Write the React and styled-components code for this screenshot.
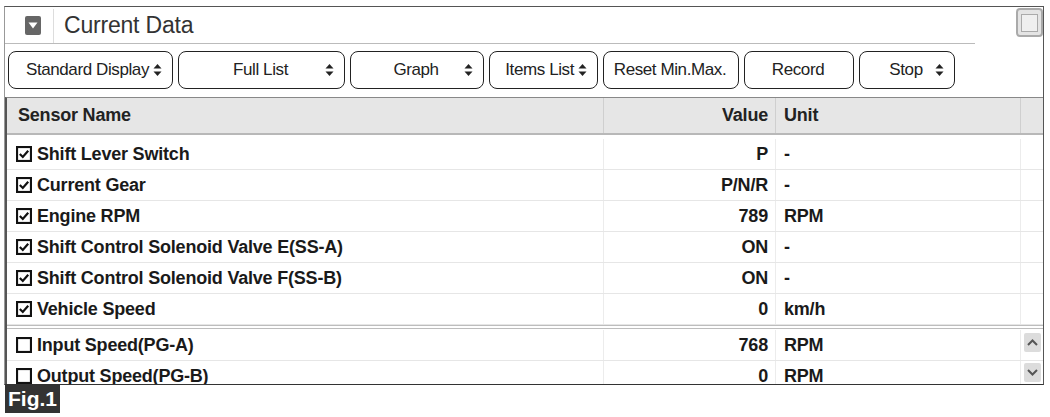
import styled, { createGlobalStyle } from "styled-components";

const GlobalStyle = createGlobalStyle`
  html, body {
    margin: 0;
    padding: 0;
    background: #fff;
  }
  body {
    font-family: "Liberation Sans", Arial, sans-serif;
    color: #222;
  }
`;

const Page = styled.div`
  width: 1050px;
  height: 417px;
  padding: 6px 6px 0 4px;
  box-sizing: border-box;
  overflow: hidden;
`;

const Window = styled.div`
  height: 379px;
  border-top: 1px solid #555;
  border-left: 1px solid #999;
  border-right: 1px solid #555;
  border-bottom: 1px solid #333;
  display: flex;
  flex-direction: column;
  box-sizing: border-box;
`;

const TitleRow = styled.div`
  display: flex;
  align-items: flex-start;
  height: 37px;
`;

const TitleBar = styled.div`
  width: 970px;
  height: 36px;
  border-bottom: 1px solid #bbb;
  display: flex;
  align-items: center;
`;

const TitleIcon = styled.div`
  width: 16px;
  height: 19px;
  margin-left: 20px;
  background: #666;
  border-radius: 2px;
  display: flex;
  align-items: center;
  justify-content: center;
`;

const TitleSep = styled.div`
  width: 1px;
  align-self: stretch;
  margin: 2px 10px 0 12px;
  background: #ddd;
`;

const TitleText = styled.span`
  font-size: 23px;
  color: #333;
  letter-spacing: -0.2px;
`;

const MaxButton = styled.div`
  margin-left: auto;
  margin-top: 1px;
  width: 27px;
  height: 29px;
  box-sizing: border-box;
  border: 2px solid #aaa;
  border-radius: 4px;
  background: #e4e4e4;
  display: flex;
  align-items: center;
  justify-content: center;
`;

const MaxInner = styled.div`
  width: 15px;
  height: 16px;
  border: 1px solid #aaa;
  background: #efefef;
`;

const Toolbar = styled.div`
  display: flex;
  gap: 5px;
  padding: 7px 0 0 3px;
  height: 53px;
  box-sizing: border-box;
`;

const ToolButton = styled.div`
  width: ${(p) => p.$w}px;
  height: 38px;
  box-sizing: border-box;
  border: 1.5px solid #222;
  border-radius: 8px;
  background: #fff;
  display: grid;
  grid-template-columns: 1fr auto 1fr;
  align-items: center;
  padding: 0 10px 0 8px;
  font-size: 17px;
  letter-spacing: -0.4px;
  color: #222;
`;

const ButtonLabel = styled.span`
  grid-column: 2;
  white-space: nowrap;
`;

const ButtonArrow = styled.span`
  grid-column: 3;
  justify-self: ${(p) => (p.$tight ? "start" : "end")};
  margin-left: ${(p) => (p.$tight ? "4px" : "0")};
  display: flex;
`;

const Table = styled.div`
  flex: 1;
  border-top: 1px solid #888;
  border-left: 2px solid #555;
  overflow: hidden;
  display: flex;
  flex-direction: column;
`;

const Cols = "597px 172px 245px 1fr";

const HeaderRow = styled.div`
  display: grid;
  grid-template-columns: ${Cols};
  flex-shrink: 0;
  height: 35px;
  background: #e6e6e6;
  border-bottom: 2px solid #b8b8b8;
  font-weight: bold;
  font-size: 18px;
  letter-spacing: -0.2px;
`;

const Cell = styled.div`
  display: flex;
  align-items: center;
  justify-content: ${(p) => (p.$right ? "flex-end" : "flex-start")};
  padding: ${(p) => (p.$right ? "0 7px 0 0" : p.$name ? "0 0 0 9px" : "0 0 0 8px")};
  border-right: 1px solid ${(p) => (p.$head ? "#cfcfcf" : "#ececec")};
  white-space: nowrap;
  overflow: hidden;
  &:last-child {
    border-right: none;
  }
`;

const Group = styled.div`
  flex-shrink: 0;
  border-bottom: ${(p) => (p.$split ? "4px double #bdbdbd" : "none")};
  padding-top: ${(p) => p.$pad}px;
  position: relative;
`;

const Row = styled.div`
  display: grid;
  grid-template-columns: ${Cols};
  height: 31px;
  box-sizing: border-box;
  border-bottom: 1px solid #e6e6e6;
  font-weight: bold;
  font-size: 18px;
  letter-spacing: -0.2px;
  color: #1a1a1a;
`;

const Check = styled.span`
  display: flex;
  margin-right: 5px;
`;

const ScrollBar = styled.div`
  position: absolute;
  right: 2px;
  top: 4px;
  display: flex;
  flex-direction: column;
  gap: 11px;
`;

const ScrollBtn = styled.div`
  width: 17px;
  height: 19px;
  background: #dcdcdc;
  border-radius: 2px;
  display: flex;
  align-items: center;
  justify-content: center;
`;

const FigLabel = styled.div`
  width: 55px;
  height: 28px;
  margin-left: 1px;
  background: #333;
  color: #fff;
  font-weight: bold;
  font-size: 21px;
  display: flex;
  align-items: center;
  justify-content: center;
`;

const UpDown = () => (
  <svg width="9" height="14" viewBox="0 0 9 14">
    <path d="M4.5 1 L8.5 5.5 L0.5 5.5 Z" fill="#222" />
    <path d="M4.5 13 L8.5 8.5 L0.5 8.5 Z" fill="#222" />
  </svg>
);

const CheckBox = ({ checked }) => (
  <svg width="16" height="16" viewBox="0 0 16 16">
    <rect x="1" y="1" width="14" height="14" fill="#fff" stroke="#111" strokeWidth="2.2" />
    {checked && (
      <path d="M3.8 8 L6.8 11 L12.2 4.8" fill="none" stroke="#111" strokeWidth="2.2" />
    )}
  </svg>
);

const buttons = [
  { label: "Standard Display", w: 165, arrow: true, tight: true },
  { label: "Full List", w: 167, arrow: true },
  { label: "Graph", w: 134, arrow: true },
  { label: "Items List", w: 109, arrow: true, tight: true },
  { label: "Reset Min.Max.", w: 136 },
  { label: "Record", w: 110 },
  { label: "Stop", w: 96, arrow: true },
];

const checkedRows = [
  ["Shift Lever Switch", "P", "-"],
  ["Current Gear", "P/N/R", "-"],
  ["Engine RPM", "789", "RPM"],
  ["Shift Control Solenoid Valve E(SS-A)", "ON", "-"],
  ["Shift Control Solenoid Valve F(SS-B)", "ON", "-"],
  ["Vehicle Speed", "0", "km/h"],
];

const otherRows = [
  ["Input Speed(PG-A)", "768", "RPM"],
  ["Output Speed(PG-B)", "0", "RPM"],
];

const DataRow = ({ name, value, unit, checked }) => (
  <Row>
    <Cell $name>
      <Check>
        <CheckBox checked={checked} />
      </Check>
      {name}
    </Cell>
    <Cell $right>{value}</Cell>
    <Cell>{unit}</Cell>
    <Cell />
  </Row>
);

export default function App() {
  return (
    <Page>
      <GlobalStyle />
      <Window>
        <TitleRow>
          <TitleBar>
            <TitleIcon>
              <svg width="10" height="7" viewBox="0 0 10 7">
                <path d="M0.5 0.5 L9.5 0.5 L5 6.5 Z" fill="#fff" />
              </svg>
            </TitleIcon>
            <TitleSep />
            <TitleText>Current Data</TitleText>
          </TitleBar>
          <MaxButton>
            <MaxInner />
          </MaxButton>
        </TitleRow>
        <Toolbar>
          {buttons.map((b) => (
            <ToolButton key={b.label} $w={b.w}>
              <ButtonLabel>{b.label}</ButtonLabel>
              {b.arrow && (
                <ButtonArrow $tight={b.tight}>
                  <UpDown />
                </ButtonArrow>
              )}
            </ToolButton>
          ))}
        </Toolbar>
        <Table>
          <HeaderRow>
            <Cell $head $name style={{ paddingLeft: 11 }}>
              Sensor Name
            </Cell>
            <Cell $head $right>
              Value
            </Cell>
            <Cell $head>Unit</Cell>
            <Cell $head />
          </HeaderRow>
          <Group $split $pad={4}>
            {checkedRows.map(([n, v, u]) => (
              <DataRow key={n} name={n} value={v} unit={u} checked />
            ))}
          </Group>
          <Group $pad={1}>
            {otherRows.map(([n, v, u]) => (
              <DataRow key={n} name={n} value={v} unit={u} />
            ))}
            <ScrollBar>
              <ScrollBtn>
                <svg width="11" height="7" viewBox="0 0 11 7">
                  <path d="M1 6 L5.5 1.5 L10 6" fill="none" stroke="#555" strokeWidth="2" />
                </svg>
              </ScrollBtn>
              <ScrollBtn>
                <svg width="11" height="7" viewBox="0 0 11 7">
                  <path d="M1 1 L5.5 5.5 L10 1" fill="none" stroke="#555" strokeWidth="2" />
                </svg>
              </ScrollBtn>
            </ScrollBar>
          </Group>
        </Table>
      </Window>
      <FigLabel>Fig.1</FigLabel>
    </Page>
  );
}
